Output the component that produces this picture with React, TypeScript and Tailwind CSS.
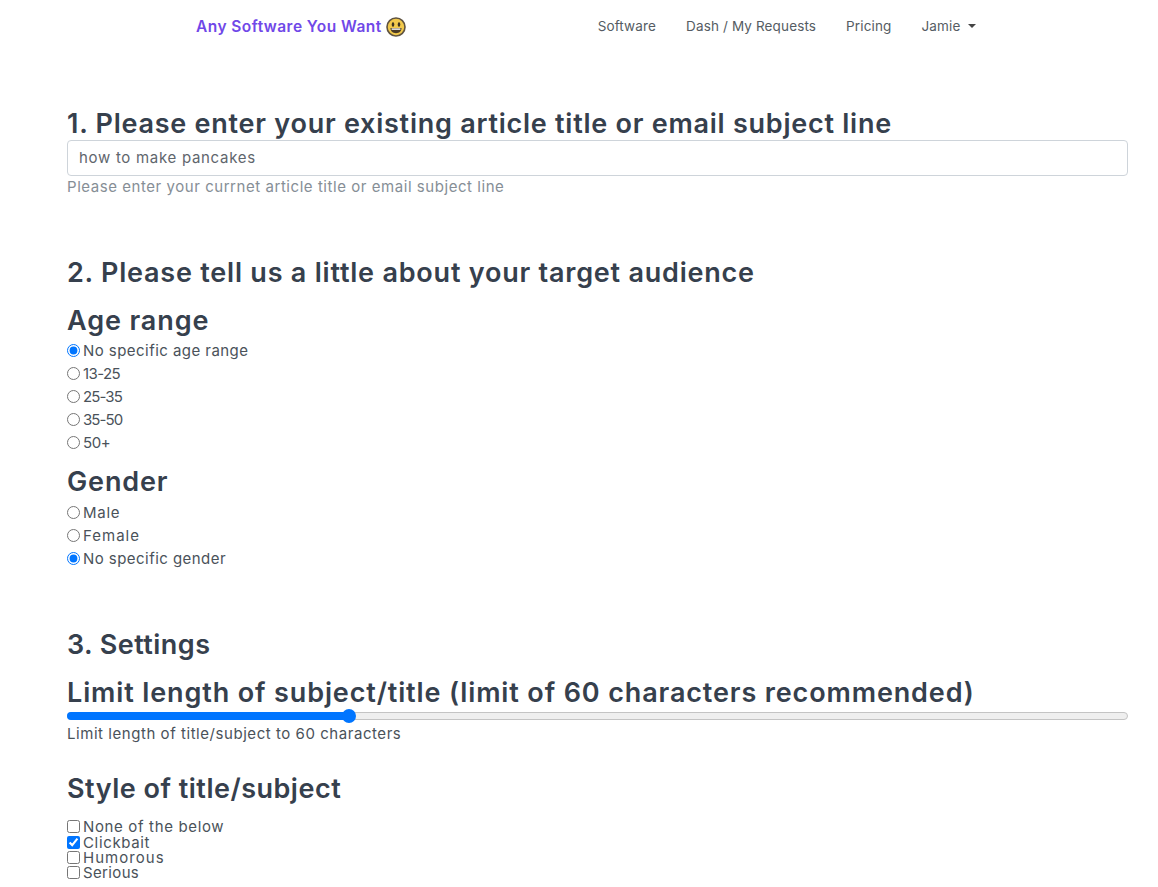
import React from "react";

const F = "font-['Inter','Noto_Sans',sans-serif]";

function Radio({ label, checked, t }: { label: string; checked?: boolean; t: string }) {
  return (
    <label className={`flex items-center h-[23px] text-[15px] text-[#4a525a] ${t}`}>
      <input type="radio" defaultChecked={checked} className="w-[13px] h-[13px] mr-[3px] -mt-[2px] accent-[#0075ff]" />
      <span>{label}</span>
    </label>
  );
}

function Check({ label, checked, t }: { label: string; checked?: boolean; t: string }) {
  return (
    <label className={`flex items-center h-[15.4px] text-[15px] leading-[15px] text-[#4a525a] ${t}`}>
      <input type="checkbox" defaultChecked={checked} className="w-[13px] h-[13px] mr-[3px] accent-[#0075ff]" />
      <span>{label}</span>
    </label>
  );
}

function Smiley() {
  return (
    <svg width="20" height="20" viewBox="0 0 20 20" className="ml-[4px]">
      <circle cx="10" cy="10" r="9" fill="#f2c94c" stroke="#5f5340" strokeWidth="1.6" />
      <ellipse cx="7" cy="7.5" rx="1.3" ry="2.2" fill="#3d3320" />
      <ellipse cx="13" cy="7.5" rx="1.3" ry="2.2" fill="#3d3320" />
      <path d="M4.5 11h11c0 3.4-2.4 5.2-5.5 5.2S4.5 14.4 4.5 11z" fill="#4a3b25" />
      <path d="M5.6 11.4h8.8v1.4H5.6z" fill="#ffffff" />
    </svg>
  );
}

export default function App() {
  const h = "font-semibold text-[27px] leading-[32px] text-[#36404d]";
  return (
    <div className={`${F} bg-white h-[887px] overflow-hidden`}>
      <nav className="flex items-center h-[52px] pl-[196px]">
        <a className="flex items-center pt-px text-[15.5px] font-semibold tracking-[0.45px] text-[#7048e8]">
          Any Software You Want
          <Smiley />
        </a>
        <ul className="flex items-center ml-[192px] text-[13.5px] tracking-[0.14px] text-[#555c63] gap-[30px]">
          <li>Software</li>
          <li>Dash / My Requests</li>
          <li>Pricing</li>
          <li className="flex items-center">
            Jamie
            <span className="ml-[8px] w-0 h-0 border-x-[4px] border-x-transparent border-t-[4px] border-t-[#444]" />
          </li>
        </ul>
      </nav>

      <main className="pl-[67px] pr-[30px]">
        <h2 className={`${h} mt-[56px] tracking-[0.75px]`}>
          1. Please enter your existing article title or email subject line
        </h2>
        <input
          readOnly
          value="how to make pancakes"
          className="block w-full h-[36px] px-[11px] pb-[2px] border border-[#ced4da] rounded-[4px] text-[15px] text-[#5f666d] tracking-[0.7px] outline-none"
        />
        <p className="text-[15px] leading-[22px] text-[#868e96] tracking-[0.55px]">
          Please enter your currnet article title or email subject line
        </p>

        <h2 className={`${h} mt-[59px] tracking-[0.78px]`}>
          2. Please tell us a little about your target audience
        </h2>
        <h3 className={`${h} mt-[16px] tracking-[0.9px]`}>Age range</h3>
        <div className="mt-[3px]">
          <Radio label="No specific age range" checked t="tracking-[0.45px]" />
          <Radio label="13-25" t="tracking-[-0.6px]" />
          <Radio label="25-35" t="tracking-[-0.9px]" />
          <Radio label="35-50" t="tracking-[-0.9px]" />
          <Radio label="50+" t="tracking-[-0.4px]" />
        </div>
        <h3 className={`${h} mt-[11px] tracking-[0.85px]`}>Gender</h3>
        <div className="mt-[4px]">
          <Radio label="Male" t="tracking-[0.75px]" />
          <Radio label="Female" t="tracking-[1px]" />
          <Radio label="No specific gender" checked t="tracking-[0.45px]" />
        </div>

        <h2 className={`${h} mt-[58px] tracking-[0.45px]`}>3. Settings</h2>
        <h3 className={`${h} mt-[16px] tracking-[0.87px]`}>
          Limit length of subject/title (limit of 60 characters recommended)
        </h3>
        <div className="relative mt-[3px] h-[8px] rounded-full border border-[#c4c4c4] bg-[#efefef]">
          <div className="h-[8px] -mt-px -ml-px w-[283px] rounded-full bg-[#0075ff]" />
          <div className="absolute left-[274px] top-[-4px] w-[14px] h-[14px] rounded-full bg-[#0075ff]" />
        </div>
        <p className="text-[15px] leading-[22px] mt-[3px] text-[#4a525a] tracking-[0.55px]">
          Limit length of title/subject to 60 characters
        </p>
        <h3 className={`${h} mt-[28px] tracking-[0.5px]`}>Style of title/subject</h3>
        <div className="mt-[14px]">
          <Check label="None of the below" t="tracking-[0.65px]" />
          <Check label="Clickbait" t="tracking-[0.65px]" checked />
          <Check label="Humorous" t="tracking-[1.05px]" />
          <Check label="Serious" t="tracking-[0.35px]" />
        </div>
      </main>
    </div>
  );
}
